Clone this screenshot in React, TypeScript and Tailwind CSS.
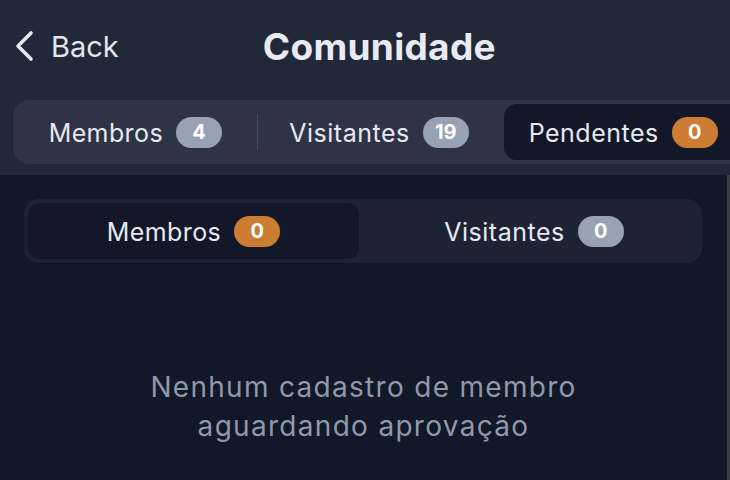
import React from "react";

function Badge({ n, orange }: { n: string; orange?: boolean }) {
  return (
    <span
      className={
        "inline-flex h-[31px] min-w-[46px] items-center justify-center rounded-full px-[12px] text-[20px] font-bold leading-none text-white " +
        (orange ? "bg-[#cc7d33]" : "bg-[#97a2b5]")
      }
    >
      {n}
    </span>
  );
}

export default function App() {
  return (
    <div
      className="relative flex h-[480px] w-[730px] flex-col overflow-hidden bg-[#111827] text-[#e5e9f0]"
      style={{ fontFamily: "Inter, 'Noto Sans', sans-serif" }}
    >
      {/* header */}
      <div className="h-[175px] shrink-0 bg-[#212838]">
        <div className="flex h-[92px] items-center">
          <div className="ml-[14px] flex items-center">
            <svg width="20" height="32" viewBox="0 0 20 32" fill="none">
              <path d="M17 3 L4 16 L17 29" stroke="#e5e9f0" strokeWidth="3.6" strokeLinecap="round" strokeLinejoin="round" />
            </svg>
            <span className="ml-[17px] text-[29px] leading-none text-[#e2e6ee]">Back</span>
          </div>
          <h1 className="ml-[144px] text-[37px] font-bold leading-none tracking-[0.3px] text-[#e8ebf1]">Comunidade</h1>
        </div>
        <div className="ml-[13px] mt-[8px] flex h-[64px] w-[733px] items-center rounded-[16px] bg-[#2e3446] p-[4px]">
          <div className="flex h-full w-[237px] items-center justify-center gap-[13px]">
            <span className="mt-[3px] text-[25px] tracking-[0.4px]">Membros</span>
            <Badge n="4" />
          </div>
          <div className="mx-[3px] h-[36px] w-[1px] bg-[#474e5f]" />
          <div className="flex h-full w-[237px] items-center justify-center gap-[13px]">
            <span className="mt-[3px] text-[25px] tracking-[0.5px]">Visitantes</span>
            <Badge n="19" />
          </div>
          <div className="mx-[3px] h-[36px] w-[1px]" />
          <div className="flex h-full w-[238px] items-center justify-center gap-[13px] rounded-[13px] bg-[#121828]">
            <span className="mt-[3px] text-[25px] tracking-[0.5px]">Pendentes</span>
            <Badge n="0" orange />
          </div>
        </div>
      </div>

      {/* body */}
      <div className="flex flex-1 flex-col pr-[3px]">
        <div className="ml-[24px] mt-[24px] flex h-[64px] w-[678px] rounded-[15px] bg-[#1e2334] p-[4px]">
          <div className="flex h-full w-[331px] items-center justify-center gap-[13px] rounded-[12px] bg-[#121828]">
            <span className="mt-[3px] text-[25px] tracking-[0.4px]">Membros</span>
            <Badge n="0" orange />
          </div>
          <div className="flex h-full flex-1 items-center justify-center gap-[13px] pl-[11px]">
            <span className="mt-[3px] text-[25px] tracking-[0.5px]">Visitantes</span>
            <Badge n="0" />
          </div>
        </div>
        <p className="mt-[105px] text-center text-[28px] leading-[39px] tracking-[1.3px] text-[#8f99ab]">
          Nenhum cadastro de membro
          <br />
          aguardando aprovação
        </p>
      </div>
      <div className="absolute bottom-0 right-0 top-[175px] w-[3px] bg-[#3b3d42]" />
    </div>
  );
}
